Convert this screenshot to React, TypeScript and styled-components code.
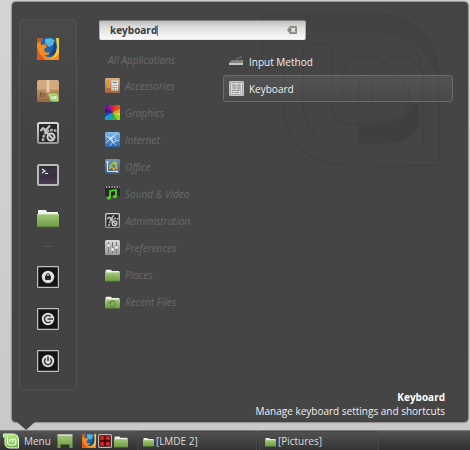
import React, { useState } from "react";
import styled, { createGlobalStyle, css } from "styled-components";

const GlobalStyle = createGlobalStyle`
  * { box-sizing: border-box; }
  body {
    margin: 0;
    font-family: "Open Sans", "Noto Sans", sans-serif;
    font-size: 10px;
    line-height: 14px;
    color: #f0f0f0;
    background: #cbcbcb;
  }
  button, input { font: inherit; color: inherit; }
`;

const Desktop = styled.div`
  display: flex;
  flex-direction: column;
  min-height: 100vh;
  background: linear-gradient(#d4d4d4, #c8c8c8);
`;

const MenuPanel = styled.section`
  position: relative;
  flex: 1;
  display: flex;
  flex-direction: column;
  margin: 2px 2px 8px 12px;
  padding: 17px 0 4px 7px;
  background: #454545;
  border-radius: 4px;
  box-shadow: 0 0 1px 1px rgba(90, 90, 90, 0.5);
`;

const Watermark = styled.svg`
  position: absolute;
  top: 0;
  right: 0;
  width: 260px;
  height: 190px;
  pointer-events: none;
`;

const Pointer = styled.svg`
  position: absolute;
  left: 5px;
  top: 100%;
  width: 18px;
  height: 8px;
`;

const MenuBody = styled.div`
  position: relative;
  flex: 1;
  display: flex;
  align-items: flex-start;
  gap: 22px;
`;

const Sidebar = styled.nav`
  display: flex;
  flex-direction: column;
  align-items: center;
  gap: 20px;
  padding: 18px 17px 17px;
  border: 1px solid #525252;
  border-radius: 4px;
  background: linear-gradient(#4a4a4a, #434343 30%, #434343);
`;

const IconButton = styled.button<{ $size: number }>`
  display: block;
  width: ${(p) => p.$size}px;
  height: ${(p) => p.$size}px;
  padding: 0;
  border: 0;
  background: none;
  svg { display: block; width: 100%; height: 100%; overflow: visible; }
`;

const Separator = styled.hr`
  width: 8px;
  height: 1px;
  margin: -2px 0 -1px;
  border: 0;
  background: #5a5a5a;
`;

const Main = styled.div`
  flex: 1;
  min-width: 0;
  padding: 1px 15px 0 0;
`;

const SearchBox = styled.div`
  display: flex;
  align-items: center;
  width: 207px;
  height: 20px;
  padding: 0 8px 0 10px;
  border-radius: 2px;
  background: linear-gradient(#bdbdbd, #dedede 35%, #fafafa);
  border: 1px solid #8d8d8d;
  border-color: #828282 #b0b0b0 #e8e8e8;
  color: #3c3c3c;
  font-weight: 700;
`;

const SearchInput = styled.input`
  field-sizing: content;
  max-width: 160px;
  padding: 0;
  border: 0;
  outline: 0;
  background: none;
`;

const Caret = styled.span`
  width: 1px;
  height: 11px;
  background: #777;
`;

const ClearButton = styled.button`
  display: flex;
  margin-left: auto;
  padding: 0;
  border: 0;
  background: none;
`;

const Columns = styled.div`
  display: grid;
  grid-template-columns: 124px 1fr;
  align-items: start;
  margin-top: 8px;
`;

const List = styled.ul`
  margin: 0;
  padding: 0;
  list-style: none;
`;

const rowBase = css`
  display: flex;
  align-items: center;
  gap: 5px;
  width: 100%;
  height: 27px;
  padding: 0 5px;
  border: 1px solid transparent;
  border-radius: 3px;
  background: none;
  text-align: left;
  white-space: nowrap;
  svg { width: 15px; height: 15px; flex: none; overflow: visible; }
`;

const CategoryRow = styled.button<{ $plain?: boolean }>`
  ${rowBase}
  color: #6a6a6a;
  font-style: italic;
  ${(p) => p.$plain && css`height: 24px; padding-left: 8px;`}
`;

const AppRow = styled.button<{ $selected?: boolean }>`
  ${rowBase}
  ${(p) => p.$selected && css`
    border-color: #6c6c6c;
    background: linear-gradient(rgba(255, 255, 255, 0.08), rgba(255, 255, 255, 0.02));
  `}
`;

const Description = styled.footer`
  position: relative;
  padding-right: 23px;
  text-align: right;
`;

const AppName = styled.div`
  font-weight: 700;
  color: #fff;
`;

const Taskbar = styled.footer`
  display: flex;
  align-items: center;
  height: 20px;
  padding-left: 3px;
  border-top: 1px solid #7b7b7b;
  background: linear-gradient(#555, #3c3c3c 60%, #303030);
`;

const MenuButton = styled.button`
  display: flex;
  align-items: center;
  gap: 5px;
  padding: 0;
  border: 0;
  background: none;
  color: #d8dde2;
  svg { width: 16px; height: 16px; }
`;

const Launchers = styled.div`
  display: flex;
  align-items: center;
  gap: 2px;
  margin: 0 9px 0 6px;
  button:first-child { margin-right: 7px; }
`;

const Tasks = styled.div`
  display: flex;
  flex: 1;
  gap: 2px;
`;

const TaskButton = styled.button`
  display: flex;
  align-items: center;
  gap: 2px;
  flex: 0 1 120px;
  height: 19px;
  padding: 0 5px;
  border: 1px solid #474747;
  border-bottom: 0;
  border-radius: 3px 3px 0 0;
  background: linear-gradient(#505050, #353535);
  color: #dedede;
  svg { width: 11px; height: 11px; overflow: visible; }
`;

const Defs = () => (
  <defs>
    <linearGradient id="folder" x2="0" y2="1"><stop stopColor="#a3c878" /><stop offset="1" stopColor="#6f9a42" /></linearGradient>
    <linearGradient id="steel" x2="0" y2="1"><stop stopColor="#d8d8d8" /><stop offset="1" stopColor="#989898" /></linearGradient>
    <linearGradient id="wood" x2="0" y2="1"><stop stopColor="#d9b184" /><stop offset="1" stopColor="#93683d" /></linearGradient>
    <linearGradient id="sky" x2="0" y2="1"><stop stopColor="#7fb9ee" /><stop offset="1" stopColor="#2c66aa" /></linearGradient>
    <linearGradient id="flame" x2="1" y2="1"><stop stopColor="#e8752a" /><stop offset=".5" stopColor="#f08a1e" /><stop offset="1" stopColor="#ffd21f" /></linearGradient>
    <linearGradient id="screen" x2="0" y2="1"><stop stopColor="#211f25" /><stop offset="1" stopColor="#4c3f58" /></linearGradient>
    <linearGradient id="office" x2="0" y2="1"><stop stopColor="#6e92b6" /><stop offset="1" stopColor="#3d5b7d" /></linearGradient>
    <linearGradient id="mint" x2="0" y2="1"><stop stopColor="#b8e986" /><stop offset="1" stopColor="#6fb73a" /></linearGradient>
  </defs>
);

const Firefox = () => (
  <svg viewBox="0 0 22 22">
    <rect width="22" height="22" rx="1.5" fill="#f28c1e" />
    <path d="M5 0H20V8Q20 17 14 19Q6 20 4 13Q3 5 5 0Z" fill="#1f62a8" />
    <path d="M8 1L14 0L18 3L16 7L12 9L8 5Z" fill="#56b5dc" />
    <path d="M17 3Q21 6 19 13Q17 18 12 17L16 12Z" fill="#123f86" />
    <path d="M0 6L2 4L4 7L8 6L10 9L7 11L8 14Q11 15 13 14Q12 18 7 17Q10 20 15 19Q20 17 20 9L22 10V21Q22 22 21 22H1Q0 22 0 21Z" fill="#f28c1e" />
    <path d="M0 9Q2 17 9 22H1Q0 22 0 21Z" fill="#dc5a20" />
    <path d="M19 0H21Q22 0 22 1V15Q19 20 13 21Q20 17 20 9Z" fill="#f3cf2a" />
    <path d="M0 1Q0 0 1 0H6L4 4L2 4L0 6Z" fill="#bb5c30" />
  </svg>
);

const Package = () => (
  <svg viewBox="0 0 22 22">
    <rect y=".5" width="22" height="21.500" rx="1.500" fill="url(#wood)" />
    <path d="M1 0H21L22 10H0Z" fill="#d3aa7c" />
    <path d="M0 10H22" stroke="#b68a5b" strokeWidth=".7" />
    <path d="M9.500 0H12.500V13L11 12L9.500 13Z" fill="#e3cba8" />
    <path d="M4 13V17M3 14L4 12.500L5 14M7 13V17" stroke="#6f4925" fill="none" />
    <path d="M12 14H18Q21 14 21 17V21H16Q13 21 13 18V16H12Z" fill="#8fd35a" stroke="#c5ea9d" strokeWidth=".8" />
    <path d="M15 16V18.500H19V16.500H17V18" stroke="#e9fbd8" fill="none" />
  </svg>
);

const Admin = () => (
  <svg viewBox="0 0 22 22">
    <rect x="1" y="1" width="20" height="20" rx="1.500" fill="#292929" stroke="url(#steel)" strokeWidth="2" />
    <path d="M6 19Q6 9 15 8Q19 8 20 10" fill="none" stroke="#b5b5b5" strokeWidth="2.500" strokeDasharray="2.500 1" />
    <circle cx="14" cy="15" r="3.500" fill="none" stroke="#cfcfcf" strokeWidth="2" />
    <path d="M3.500 9L6 6L9 8L13 3.500M7 8L16 17" fill="none" stroke="#c8c8c8" strokeWidth="2" />
  </svg>
);

const Terminal = () => (
  <svg viewBox="0 0 22 22">
    <rect x="1" y="1" width="20" height="20" rx="1" fill="url(#screen)" stroke="#b9b9b9" strokeWidth="2" />
    <path d="M2 2H20V9Q12 11 2 12Z" fill="#fff" opacity=".06" />
    <path d="M5 5L8 7L5 9M8 9.500H11" fill="none" stroke="#e4e4e4" strokeWidth="1.200" />
  </svg>
);

const Folder = ({ recent }: { recent?: boolean }) => (
  <svg viewBox="0 0 22 22">
    <path d="M1 4H9L10 6H21V11H1Z" fill="#f1f3ee" />
    <rect y="8" width="22" height="13" rx=".6" fill="url(#folder)" />
    <path d="M0 8.500H22" stroke="#b9d797" />
    <path d="M0 21H22" stroke="#4d6b30" />
    {recent && <path d="M7 14A4 4 0 1 1 11 18.500M7 14L5 12M7 14L9.500 13M7.500 16.500L11 18.500" fill="none" stroke="#64893f" strokeWidth="1.600" />}
  </svg>
);

const SessionIcon = ({ kind }: { kind: "lock" | "logout" | "power" }) => (
  <svg viewBox="0 0 22 22">
    <rect x=".6" y=".6" width="20.800" height="20.800" rx=".5" fill="#151515" stroke="#c0c0c0" strokeWidth="1.200" />
    <circle cx="11" cy="11" r="6.200" fill="#dedede" />
    {kind === "lock" && <path d="M8.500 10H13.500V13.500H8.500Z" fill="#222" stroke="#222" strokeWidth=".8" />}
    {kind === "lock" && <path d="M9.500 10V8.500Q11 6.500 12.500 8.500V10" fill="none" stroke="#222" />}
    {kind === "logout" && <path d="M13.500 8.500A3.500 3.500 0 1 0 13.500 13.500M10.500 11H16" fill="none" stroke="#333" strokeWidth="1.500" />}
    {kind === "power" && <path d="M8.800 8.500A3.500 3.500 0 1 0 13.200 8.500M11 6.500V11" fill="none" stroke="#333" strokeWidth="1.500" />}
  </svg>
);

const Accessories = () => (
  <svg viewBox="0 0 15 15">
    <rect width="15" height="15" rx="1.500" fill="url(#wood)" />
    <path d="M2 3L3.500 1L5 3V13H2Z" fill="#ef971f" /><path d="M2 10H5V13H2Z" fill="#d95b32" />
    <rect x="6.500" y="2.500" width="6.500" height="10" fill="#e8e8e0" />
    <path d="M7.500 4.500H12" stroke="#74969a" strokeWidth="1.500" />
    <path d="M7.500 7.500H12M7.500 9.500H12M7.500 11.200H12" stroke="#777" strokeDasharray="1 .7" />
  </svg>
);

const rim = ["7.500,0", "12,0", "15,3.500", "15,7.500", "15,11.500", "12,15", "7.500,15", "3,15", "0,11.500", "0,7.500", "0,3.500", "3,0"];
const corners: Record<number, string> = { 1: "15,0", 4: "15,15", 7: "0,15", 10: "0,0" };
const wheelColours = ["#ef2d20", "#f44b18", "#fb9a10", "#e8e015", "#8fd820", "#35bb3b", "#18a8a0", "#149ce8", "#1a45c8", "#38128f", "#6b159c", "#c21878"];
const Graphics = () => (
  <svg viewBox="0 0 15 15">
    {rim.map((p, i) => (
      <polygon key={p} points={`7.500,7.500 ${p} ${corners[i] ?? ""} ${rim[(i + 1) % 12]}`} fill={wheelColours[i]} />
    ))}
  </svg>
);

const Internet = () => (
  <svg viewBox="0 0 15 15">
    <rect width="15" height="15" rx="1.500" fill="url(#sky)" />
    <path d="M1 4L6 6L12 1M6 6L8 10L14 8M8 10L5 14M6 6L1 11M8 10L11 13M9 4L11 8" fill="none" stroke="#c3defa" strokeWidth=".9" />
    <path d="M3 5L6 5L9 3L7 8L9 11L6 9Z" fill="#d8ebff" opacity=".7" />
  </svg>
);

const Office = () => (
  <svg viewBox="0 0 15 15">
    <rect width="15" height="15" rx="1.500" fill="url(#office)" />
    <path d="M2.500 2V12.500H13M1.500 3.500L2.500 2L3.500 3.500M11.500 11.500L13 12.500L11.500 13.500" fill="none" stroke="#dce6ee" />
    <path d="M4 8L8 4L10 3L12 5M9 4L12 8" fill="none" stroke="#a7cc39" strokeWidth="1.500" />
    <path d="M4 10L7 8L9 11L11 8L12 10" fill="none" stroke="#d8ad32" strokeWidth="1.300" />
  </svg>
);

const SoundVideo = () => (
  <svg viewBox="0 0 15 15">
    <rect width="15" height="15" rx="1" fill="#292929" />
    <path d="M0 10H15V15H0Z" fill="#454545" />
    <path d="M1 1H15" stroke="#d5d5d5" strokeWidth="1.500" strokeDasharray="1.300 1.400" />
    <path d="M5 12V5L11 4V10" fill="none" stroke="#4bdc22" strokeWidth="1.700" />
    <ellipse cx="3.800" cy="12" rx="2" ry="1.600" fill="#4bdc22" /><ellipse cx="9.800" cy="10.500" rx="2" ry="1.600" fill="#4bdc22" />
  </svg>
);

const Preferences = () => (
  <svg viewBox="0 0 15 15">
    <rect width="15" height="15" rx="1.500" fill="url(#steel)" />
    <path d="M3.500 2V13M7.500 2V13M11.500 2V13" stroke="#777" />
    <path d="M2 4H5V7H2ZM6 8H9V11H6ZM10 6H13V9H10Z" fill="#f7f7f7" stroke="#888" strokeWidth=".5" />
  </svg>
);

const InputMethod = () => (
  <svg viewBox="0 0 15 15">
    <path d="M3 6H14V9H0Z" fill="#8d908a" /><path d="M0 9H14V11H0Z" fill="#c3c4be" />
    <path d="M2 8H13M4 6.500H13" stroke="#666" strokeWidth=".7" strokeDasharray="1 .5" />
    <path d="M8 6Q7 4 10 4T12 2" fill="none" stroke="#777" />
  </svg>
);

const KeyboardIcon = () => (
  <svg viewBox="0 0 15 15">
    <rect width="15" height="15" rx="1.500" fill="#c6c6c6" />
    <rect x="1.500" y="1.500" width="12" height="12" rx="1" fill="#dcdcdc" stroke="#989898" strokeWidth=".8" />
    <path d="M3 4.500H12M3 7H12" stroke="#929292" strokeWidth="1.300" strokeDasharray="1.600 .8" />
    <path d="M3 9.500H6M7 9.500H12M3 11.500H5M6 11.500H10M11 11.500H12" stroke="#929292" />
    <path d="M5 2V5L6 7V10M10 2V6L9 10" stroke="#8d8d8d" strokeWidth=".6" fill="none" />
  </svg>
);

const MintLogo = () => (
  <svg viewBox="0 0 16 16">
    <path d="M.5 1H10Q15.500 1 15.500 7V15H7Q2 15 2 10V5Q2 4 .5 4Z" fill="url(#mint)" stroke="#e9fbd5" />
    <path d="M4.500 3.500V9.500Q4.500 12 7 12H10.500Q12.800 12 12.800 9.500V7.500Q12.800 6 11.300 6T9.800 7.500V9.500M9.800 7.500Q9.800 6 8.300 6T6.900 7.500V9.500" fill="none" stroke="#fff" strokeWidth="1.100" />
  </svg>
);

const ShowDesktop = () => (
  <svg viewBox="0 0 16 16">
    <rect x=".5" y="2" width="15" height="13" fill="url(#folder)" />
    <path d="M.5 2H15.500" stroke="#ddd" strokeWidth="1.500" />
    <path d="M3.500 11.500H12.500V15H3.500Z" fill="#2d3a23" />
  </svg>
);

const RedGrid = () => (
  <svg viewBox="0 0 14 14">
    <rect x=".6" y=".6" width="12.800" height="12.800" rx="1" fill="#310909" stroke="#c3b8b8" strokeWidth="1.200" />
    <path d="M2 2H6.300V6.300H2ZM7.700 2H12V6.300H7.700ZM2 7.700H6.300V12H2ZM7.700 7.700H12V12H7.700Z" fill="#bb1d24" />
    <path d="M3.500 3.500H5V5H3.500ZM9 3.500H10.500V5H9ZM3.500 9H5V10.500H3.500ZM9 9H10.500V10.500H9Z" fill="#dd4545" />
  </svg>
);

const categories: [string, React.ReactNode][] = [
  ["Accessories", <Accessories />],
  ["Graphics", <Graphics />],
  ["Internet", <Internet />],
  ["Office", <Office />],
  ["Sound & Video", <SoundVideo />],
  ["Administration", <Admin />],
  ["Preferences", <Preferences />],
  ["Places", <Folder />],
  ["Recent Files", <Folder recent />],
];

const favourites: [string, React.ReactNode][] = [
  ["Firefox", <Firefox />],
  ["Software Manager", <Package />],
  ["System Settings", <Admin />],
  ["Terminal", <Terminal />],
  ["Files", <Folder />],
];

const session: [string, "lock" | "logout" | "power"][] = [
  ["Lock screen", "lock"],
  ["Log out", "logout"],
  ["Quit", "power"],
];

export default function App() {
  const [query, setQuery] = useState("keyboard");
  return (
    <Desktop>
      <GlobalStyle />
      <MenuPanel>
        <Watermark viewBox="0 0 260 190" aria-hidden="true">
          <Defs />
          <g fill="none" stroke="#414141" strokeWidth="1.500">
            <path d="M54 12H172Q228 18 231 76V163H133Q78 157 75 103V66H54Z" />
            <path d="M80 29H175Q212 34 215 76V148H133Q98 140 95 105V43" />
            <path d="M104 42H123V105Q125 123 142 122L184 119Q201 115 201 98V82M134 106V75Q136 55 158 54Q170 54 174 62Q184 50 202 57Q214 63 216 78M151 106V79Q156 65 164 79V106M181 106V79Q187 66 195 79V99" />
            <path d="M54 110Q60 155 113 169L235 163" opacity=".5" />
          </g>
          <path d="M54 12H172Q228 18 231 76Q210 29 170 29H54Z" fill="#414141" opacity=".6" />
          <path d="M150 123L181 121Q200 119 203 102H210L212 120Q205 141 181 141L150 142Z" fill="#3d3d3d" opacity=".8" />
        </Watermark>
        <MenuBody>
          <Sidebar aria-label="Favorites">
            {favourites.map(([name, icon]) => (
              <IconButton key={name} $size={22} aria-label={name}>{icon}</IconButton>
            ))}
            <Separator />
            {session.map(([name, kind]) => (
              <IconButton key={name} $size={22} aria-label={name}><SessionIcon kind={kind} /></IconButton>
            ))}
          </Sidebar>
          <Main>
            <SearchBox>
              <SearchInput aria-label="Search" value={query} onChange={(e) => setQuery(e.target.value)} />
              <Caret />
              <ClearButton aria-label="Clear search" onClick={() => setQuery("")}>
                <svg width="10" height="8" viewBox="0 0 10 8">
                  <path d="M3 0H9Q10 0 10 1V7Q10 8 9 8H3L0 4Z" fill="#8c8c84" />
                  <path d="M4.500 2L8 6M8 2L4.500 6" stroke="#f2f2f2" strokeWidth="1.200" />
                </svg>
              </ClearButton>
            </SearchBox>
            <Columns>
              <List>
                <li><CategoryRow $plain>All Applications</CategoryRow></li>
                {categories.map(([name, icon]) => (
                  <li key={name}><CategoryRow>{icon}{name}</CategoryRow></li>
                ))}
              </List>
              <List>
                <li><AppRow><InputMethod />Input Method</AppRow></li>
                <li><AppRow $selected><KeyboardIcon />Keyboard</AppRow></li>
              </List>
            </Columns>
          </Main>
        </MenuBody>
        <Description>
          <AppName>Keyboard</AppName>
          Manage keyboard settings and shortcuts
        </Description>
        <Pointer viewBox="0 0 18 8" aria-hidden="true"><path d="M0 0H18L9 8Z" fill="#454545" /></Pointer>
      </MenuPanel>
      <Taskbar>
        <MenuButton><MintLogo />Menu</MenuButton>
        <Launchers>
          <IconButton $size={16} aria-label="Show desktop"><ShowDesktop /></IconButton>
          <IconButton $size={14} aria-label="Firefox"><Firefox /></IconButton>
          <IconButton $size={14} aria-label="Terminator"><RedGrid /></IconButton>
          <IconButton $size={14} aria-label="Files"><Folder /></IconButton>
        </Launchers>
        <Tasks>
          <TaskButton><Folder />[LMDE 2]</TaskButton>
          <TaskButton><Folder />[Pictures]</TaskButton>
        </Tasks>
      </Taskbar>
    </Desktop>
  );
}
